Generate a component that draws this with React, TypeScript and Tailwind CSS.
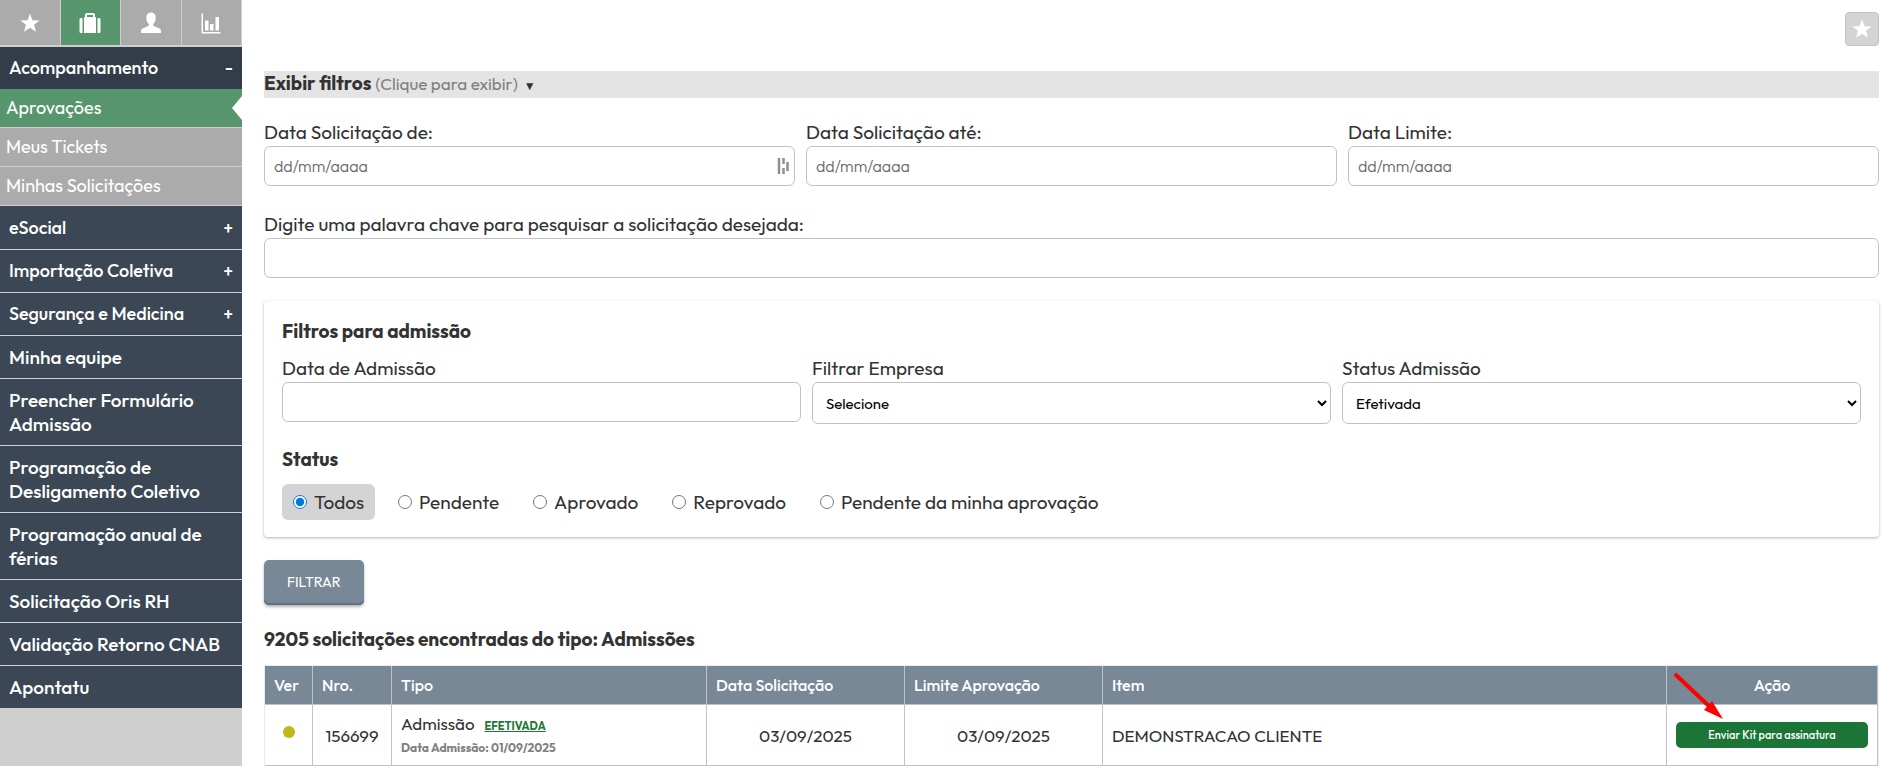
import { useState } from 'react';
import type { ReactNode } from 'react';

const STAR = 'M12 1.5l2.7 7.4 7.8.3-6.1 4.8 2.1 7.6L12 17.2l-6.5 4.4L7.6 14 1.5 9.2l7.8-.3z';

function StarIcon({ className }: { className: string }) {
  return (
    <svg viewBox="0 0 24 24" fill="currentColor" className={className} aria-hidden="true">
      <path d={STAR} />
    </svg>
  );
}

function SuitcaseIcon() {
  return (
    <svg viewBox="0 0 22 22" width="22" height="22" fill="currentColor" aria-hidden="true">
      <path d="M2 6h1.500v15H2A1.500 1.500 0 0 1 .5 19.500v-12A1.500 1.500 0 0 1 2 6z" />
      <path d="M18.500 6H20a1.500 1.500 0 0 1 1.500 1.500v12A1.500 1.500 0 0 1 20 21h-1.500z" />
      <path
        fillRule="evenodd"
        d="M5 5h1V3a2 2 0 0 1 2-2h6a2 2 0 0 1 2 2v2h1v16H5zM8 3v2h6V3z"
      />
    </svg>
  );
}

function UserIcon() {
  return (
    <svg viewBox="0 0 22 22" width="22" height="22" fill="currentColor" aria-hidden="true">
      <path d="M11 .5c3 0 4.700 2 4.700 5 0 2.600-.9 5-2.300 6.300-.4.600-.3 1.700.3 2.100l5.300 2.400c1.400.7 2 1.500 2 2.700v2H1v-2c0-1.200.6-2 2-2.700l5.300-2.400c.6-.4.7-1.500.3-2.100C7.200 10.500 6.300 8.100 6.300 5.500c0-3 1.700-5 4.700-5z" />
    </svg>
  );
}

function ChartIcon() {
  return (
    <svg viewBox="0 0 22 22" width="22" height="22" fill="currentColor" aria-hidden="true">
      <path d="M1.500 1.500H3V20h17.500v1.500h-19z" />
      <path d="M5 8.500h3.500V18.500H5zM10 12h3.500v6.500H10zM15.500 5H19v13.500h-3.500z" />
    </svg>
  );
}

function FieldHandleIcon() {
  return (
    <svg viewBox="0 0 12 18" width="12" height="18" stroke="#8f8f8f" strokeWidth="2.500" aria-hidden="true">
      <path d="M2 1v16M6.500 1v6M6.500 11v6M10.500 5v9" />
    </svg>
  );
}

const tabs: { label: string; icon: ReactNode; active?: boolean }[] = [
  { label: 'Favoritos', icon: <StarIcon className="size-[22px]" /> },
  { label: 'Trabalho', icon: <SuitcaseIcon />, active: true },
  { label: 'Perfil', icon: <UserIcon /> },
  { label: 'Relatórios', icon: <ChartIcon /> },
];

const subItems = ['Aprovações', 'Meus Tickets', 'Minhas Solicitações'];

const menu: { label: string; expandable?: boolean }[] = [
  { label: 'eSocial', expandable: true },
  { label: 'Importação Coletiva', expandable: true },
  { label: 'Segurança e Medicina', expandable: true },
  { label: 'Minha equipe' },
  { label: 'Preencher Formulário Admissão' },
  { label: 'Programação de Desligamento Coletivo' },
  { label: 'Programação anual de férias' },
  { label: 'Solicitação Oris RH' },
  { label: 'Validação Retorno CNAB' },
  { label: 'Apontatu' },
];

const statuses = ['Todos', 'Pendente', 'Aprovado', 'Reprovado', 'Pendente da minha aprovação'];

function Sidebar() {
  return (
    <aside className="w-[242px] shrink-0 bg-[#cfcfcf] text-lg leading-6 text-white">
      <div className="grid grid-cols-4 border-b-2 border-[#cfcfcf]">
        {tabs.map((tab) => (
          <button
            key={tab.label}
            aria-label={tab.label}
            className={
              'flex h-[45px] items-center justify-center border-r border-[#cfcfcf] ' +
              (tab.active ? 'bg-[#57966c]' : 'bg-[#ababab]')
            }
          >
            {tab.icon}
          </button>
        ))}
      </div>
      <nav>
        <a href="#acompanhamento" className="flex justify-between bg-[#333d4a] py-[9px] pr-[9px] pl-[9px] font-medium">
          <span>Acompanhamento</span>
          <span>-</span>
        </a>
        {subItems.map((item, i) => (
          <a
            key={item}
            href={'#sub' + i}
            className={
              'flex items-center justify-between border-b border-[#cfcfcf] pl-1.5 ' +
              (i === 0 ? 'bg-[#57966c]' : 'bg-[#ababab]')
            }
          >
            <span className="py-[7px]">{item}</span>
            {i === 0 && (
              <svg viewBox="0 0 10 24" width="10" height="24" fill="#fff" aria-hidden="true">
                <path d="M10 0v24L0 12z" />
              </svg>
            )}
          </a>
        ))}
        <div className="border-t border-[#3b4754]">
          {menu.map((item, i) => (
            <a
              key={item.label}
              href={'#menu' + i}
              className={
                'flex justify-between border-b border-[#cfcfcf] bg-[#3b4754] py-[9px] pr-[9px] pl-[9px] font-medium last:border-b-0 ' +
                (item.expandable ? 'text-lg leading-6' : 'text-[19px] leading-6')
              }
            >
              <span>{item.label}</span>
              {item.expandable && <span>+</span>}
            </a>
          ))}
        </div>
      </nav>
    </aside>
  );
}

const inputClass =
  'block h-10 w-full rounded-md border border-[#c2c2c2] bg-white px-[9px] text-base font-light text-[#333] placeholder:text-[#666]';
const selectClass =
  'block h-[42px] w-full rounded-md border border-[#c2c2c2] bg-white px-[9px] text-[15px] text-black';

function DateField({ id, label, handle }: { id: string; label: string; handle?: boolean }) {
  return (
    <div>
      <label htmlFor={id} className="block">
        {label}
      </label>
      <div className="relative">
        <input id={id} type="text" placeholder="dd/mm/aaaa" className={inputClass} />
        {handle && (
          <span className="absolute inset-y-0 right-1.5 flex items-center">
            <FieldHandleIcon />
          </span>
        )}
      </div>
    </div>
  );
}

function Filters() {
  const [status, setStatus] = useState('Todos');
  return (
    <form onSubmit={(e) => e.preventDefault()}>
      <div className="mt-[21px] grid grid-cols-3 gap-[11px]">
        <DateField id="data-de" label="Data Solicitação de:" handle />
        <DateField id="data-ate" label="Data Solicitação até:" />
        <DateField id="data-limite" label="Data Limite:" />
      </div>
      <div className="mt-[25px]">
        <label htmlFor="chave" className="block">
          Digite uma palavra chave para pesquisar a solicitação desejada:
        </label>
        <input id="chave" type="text" className={inputClass} />
      </div>

      <section className="mt-[23px] rounded-sm px-[18px] pt-[17px] pb-[17px] shadow-[0_1px_3px_rgba(0,0,0,0.3)]">
        <h2 className="font-bold">Filtros para admissão</h2>
        <div className="mt-[10px] grid grid-cols-3 gap-[11px]">
          <div>
            <label htmlFor="data-admissao" className="block">
              Data de Admissão
            </label>
            <input id="data-admissao" type="text" className={inputClass} />
          </div>
          <div>
            <label htmlFor="empresa" className="block">
              Filtrar Empresa
            </label>
            <select id="empresa" className={selectClass}>
              <option>Selecione</option>
            </select>
          </div>
          <div>
            <label htmlFor="status-admissao" className="block">
              Status Admissão
            </label>
            <select id="status-admissao" className={selectClass}>
              <option>Efetivada</option>
            </select>
          </div>
        </div>
        <fieldset>
          <legend className="pt-[22px] font-bold">Status</legend>
          <div className="mt-[11px] flex flex-wrap gap-3">
            {statuses.map((s) => (
              <label
                key={s}
                className={
                  'flex h-9 items-center gap-[7px] rounded-md px-[11px] ' + (s === status ? 'bg-[#d4d4d4]' : '')
                }
              >
                <input
                  type="radio"
                  name="status"
                  checked={s === status}
                  onChange={() => setStatus(s)}
                  className="size-[14px] accent-[#0078d7]"
                />
                {s}
              </label>
            ))}
          </div>
        </fieldset>
      </section>

      <button className="mt-[23px] h-[45px] rounded-[5px] bg-[#788896] px-[23px] text-[14px] text-white shadow-[inset_0_-2px_0_#626f7c,0_2px_3px_rgba(0,0,0,0.3)]">
        FILTRAR
      </button>
    </form>
  );
}

function Results() {
  const head = 'border-r border-b border-[#c2c2c2] px-[9px] text-left font-medium';
  const cell = 'border-r border-b border-[#c2c2c2] px-[9px]';
  return (
    <div className="mt-3 border border-b-0 border-[#ececee]">
      <table className="w-full table-fixed border-separate border-spacing-0">
        <colgroup>
          <col className="w-[48px]" />
          <col className="w-[79px]" />
          <col className="w-[315px]" />
          <col className="w-[198px]" />
          <col className="w-[198px]" />
          <col />
          <col className="w-[211px]" />
        </colgroup>
        <thead>
          <tr className="h-[39px] bg-[#788896] text-base text-white">
            <th className={head}>Ver</th>
            <th className={head}>Nro.</th>
            <th className={head}>Tipo</th>
            <th className={head}>Data Solicitação</th>
            <th className={head}>Limite Aprovação</th>
            <th className={head}>Item</th>
            <th className="relative border-r border-b border-[#c2c2c2] px-[9px] text-center font-medium">
              Ação
              <svg
                viewBox="0 0 50 48"
                width="50"
                height="48"
                className="absolute top-[6px] left-[6px] z-10"
                aria-hidden="true"
              >
                <path d="M3 3l34 32" stroke="#f00" strokeWidth="4" strokeLinecap="round" />
                <path d="M50 47L31 38l8-9z" fill="#f00" />
              </svg>
            </th>
          </tr>
        </thead>
        <tbody>
          <tr className="h-[61px] text-[17px]">
            <td className={cell}>
              <span className="mx-auto mb-1.5 block size-3 rounded-full bg-[#c0b816]" />
            </td>
            <td className={cell + ' text-center'}>156699</td>
            <td className={cell}>
              <div className="flex items-baseline gap-2.5 leading-6">
                Admissão
                <a href="#efetivada" className="text-[11px] font-bold text-[#1b7837] underline">
                  EFETIVADA
                </a>
              </div>
              <div className="text-xs leading-5 font-bold text-[#808080]">Data Admissão: 01/09/2025</div>
            </td>
            <td className={cell + ' text-center'}>03/09/2025</td>
            <td className={cell + ' text-center'}>03/09/2025</td>
            <td className={cell}>DEMONSTRACAO CLIENTE</td>
            <td className={cell}>
              <button className="block h-[26px] w-full rounded-[5px] bg-[#1b7536] text-[11px] font-medium text-white">
                Enviar Kit para assinatura
              </button>
            </td>
          </tr>
        </tbody>
      </table>
    </div>
  );
}

export default function App() {
  return (
    <div className="flex bg-white font-['Outfit','Lato',sans-serif] text-[#333]">
      <Sidebar />
      <main className="min-w-0 flex-1 pr-[19px] pl-[22px] text-[19px] leading-[27px]">
        <div className="flex justify-end pt-3">
          <button
            aria-label="Favoritar"
            className="flex h-[34px] w-[34px] items-center justify-center rounded-sm border border-[#c2c2c2] bg-[#d4d4d4] text-white"
          >
            <StarIcon className="size-[22px]" />
          </button>
        </div>
        <button className="mt-[25px] block w-full bg-[#e4e4e4] pb-0.5 text-left leading-[25px]">
          <strong>Exibir filtros</strong> <span className="text-[17px] text-[#808080]">(Clique para exibir)</span>{' '}
          <span className="ml-0.5 text-xs">▼</span>
        </button>
        <Filters />
        <h1 className="mt-[21px] font-bold">9205 solicitações encontradas do tipo: Admissões</h1>
        <Results />
      </main>
    </div>
  );
}
